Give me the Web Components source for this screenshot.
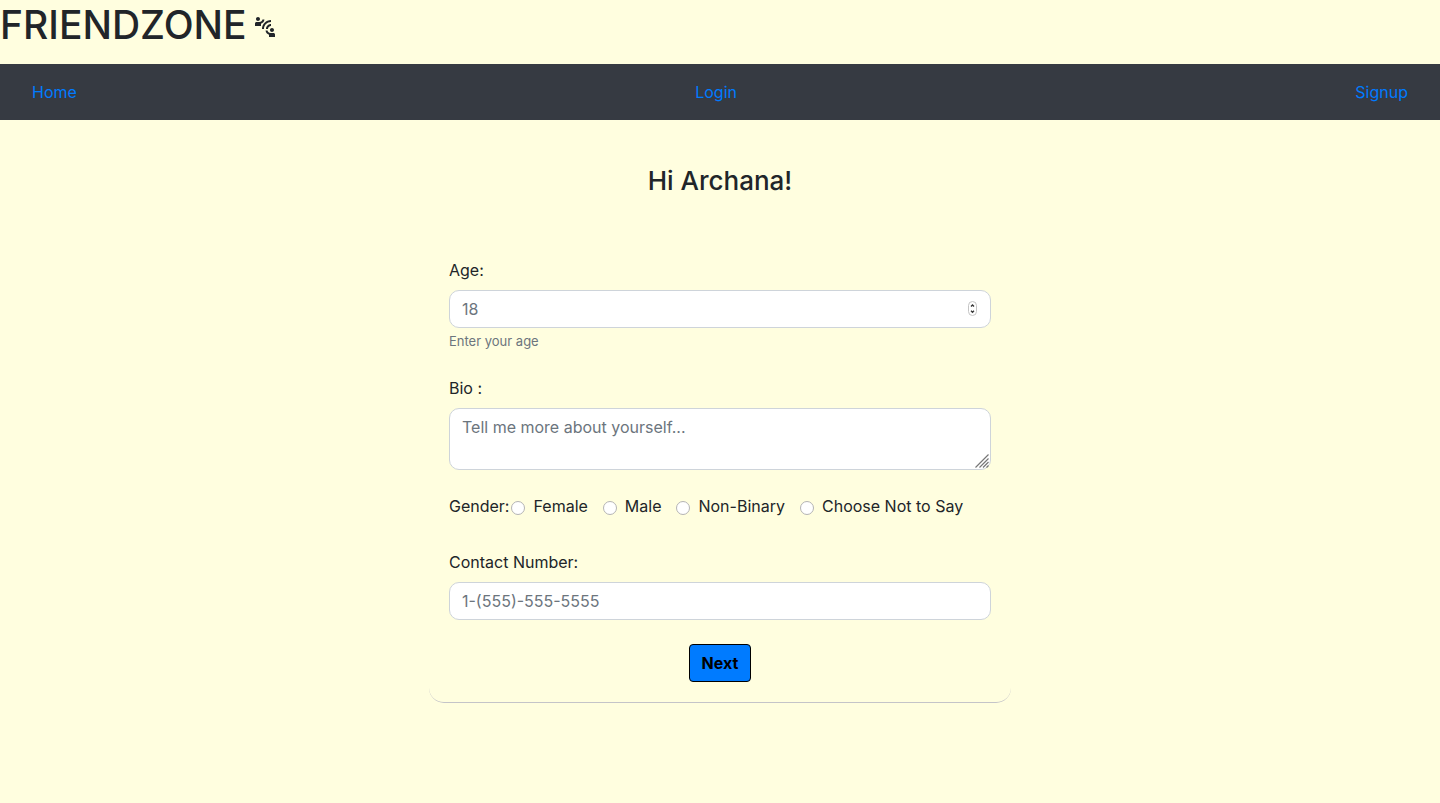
<!DOCTYPE html>
<html lang="en">
<head>
<meta charset="utf-8">
<meta name="viewport" content="width=device-width, initial-scale=1">
<title>Friendzone</title>
<style>
  body {
    margin: 0;
    background: #fffedf;
    color: #212529;
    font: 400 16px/24px Inter, "Liberation Sans", sans-serif;
  }
</style>
</head>
<body>
<fz-app></fz-app>
<script>
const define = (name, html, setup) => {
  const template = document.createElement('template');
  template.innerHTML = html;
  customElements.define(name, class extends HTMLElement {
    constructor() {
      super();
      this.attachShadow({ mode: 'open' }).append(template.content.cloneNode(true));
    }
    connectedCallback() {
      if (setup) setup(this, this.shadowRoot);
    }
  });
};

const fieldStyles = `
  :host { display: block; }
  label { display: block; margin-bottom: 8px; }
  .box { position: relative; display: flex; }
  input, textarea {
    box-sizing: border-box;
    width: 100%;
    margin: 0;
    padding: 6px 12px;
    border: 1px solid #ced4da;
    border-radius: 10px;
    background: #fff;
    color: #495057;
    font: inherit;
  }
  input { height: 38px; }
  textarea { height: 62px; resize: none; overflow: auto; }
  input::placeholder, textarea::placeholder { color: #6c757d; opacity: 1; }
  input:focus, textarea:focus { outline: 2px solid #80bdff; }
`;

define('fz-logo', `
  <style>
    :host { display: block; }
    h1 { display: flex; align-items: center; gap: 6px; margin: 0 0 14px; font-size: 39px; line-height: 50px; font-weight: 500; }
    svg { display: block; width: 24px; height: 24px; margin-top: 4px; fill: currentColor; }
  </style>
  <h1><slot></slot>
    <svg viewBox="0 0 24 24" aria-hidden="true"><path d="M11 14H9c0-4.97 4.03-9 9-9v2c-3.87 0-7 3.13-7 7zM18 11V9c-2.76 0-5 2.24-5 5h2c0-1.66 1.34-3 3-3zM7 4c0-1.11-.89-2-2-2s-2 .89-2 2 .89 2 2 2 2-.89 2-2zM11.45 4.5h-2C9.21 5.92 7.99 7 6.5 7h-3C2.67 7 2 7.67 2 8.5V11h6V8.74c1.86-.59 3.25-2.23 3.45-4.24zM19 17c1.11 0 2-.89 2-2s-.89-2-2-2-2 .89-2 2 .89 2 2 2zM20.5 18h-3c-1.49 0-2.71-1.08-2.95-2.5h-2c.2 2.01 1.59 3.65 3.45 4.24V22h6v-2.5c0-.83-.67-1.5-1.5-1.5z"/></svg>
  </h1>`);

define('fz-nav', `
  <style>
    :host { display: block; background: #363a42; }
    nav { display: flex; justify-content: space-between; padding: 8px 16px; }
    a { padding: 8px 16px; color: #007bff; text-decoration: none; }
    a:hover { text-decoration: underline; }
  </style>
  <nav><a href="#home">Home</a><a href="#login">Login</a><a href="#signup">Signup</a></nav>`);

define('fz-card', `
  <style>
    :host {
      display: flex;
      flex-direction: column;
      gap: 24px;
      box-sizing: border-box;
      width: 100%;
      max-width: 582px;
      margin: 0 auto;
      padding: 20px;
      border-bottom: 1px solid #c4c4c8;
      border-radius: 15px;
    }
  </style>
  <slot></slot>`);

define('fz-age-field', `
  <style>
    ${fieldStyles}
    input { appearance: textfield; }
    input::-webkit-inner-spin-button { appearance: none; margin: 0; }
    .spin {
      position: absolute;
      top: 11px;
      right: 14px;
      display: flex;
      padding: 0;
      border: 0;
      background: none;
    }
    small { display: block; margin: 4px 0 2px; color: #6c757d; font-size: 13px; line-height: 18px; }
  </style>
  <label for="age">Age:</label>
  <div class="box">
    <input id="age" type="number" placeholder="18" aria-describedby="hint">
    <button class="spin" type="button" tabindex="-1" aria-label="Increase age">
      <svg width="9" height="15" viewBox="0 0 9 15" fill="none" aria-hidden="true">
        <rect x=".5" y=".5" width="8" height="14" rx="4" fill="#fff" stroke="#c4c4c4"/>
        <path d="M3 5.5 4.5 4 6 5.5M3 9.8l1.5 1.5L6 9.8" stroke="#333" stroke-width="1.3"/>
      </svg>
    </button>
  </div>
  <small id="hint">Enter your age</small>`,
  (host, root) => {
    root.querySelector('.spin').onclick = () => root.querySelector('input').stepUp();
  });

define('fz-bio-field', `
  <style>
    ${fieldStyles}
    .grip { position: absolute; right: 2px; bottom: 2px; pointer-events: none; }
  </style>
  <label for="bio">Bio :</label>
  <div class="box">
    <textarea id="bio" placeholder="Tell me more about yourself..."></textarea>
    <svg class="grip" width="14" height="14" viewBox="0 0 14 14" stroke="#777" stroke-width="1.2" aria-hidden="true">
      <path d="M.5 13.5 13.5.5M4.5 13.5l9-9M8 13.5 13.5 8M11.5 13.5l2-2"/>
    </svg>
  </div>`);

define('fz-gender-field', `
  <style>
    :host { display: block; margin-bottom: 8px; }
    .group { display: flex; flex-wrap: wrap; column-gap: 15px; }
    .first { display: flex; gap: 2px; }
    label { display: flex; align-items: center; gap: 8px; }
    input {
      appearance: none;
      box-sizing: border-box;
      width: 14px;
      height: 14px;
      margin: 4px 0 0;
      border: 1px solid #b4b4b4;
      border-radius: 50%;
      background: #fff;
    }
    input:checked { border: 4px solid #007bff; }
  </style>
  <div class="group" role="radiogroup" aria-labelledby="title">
    <div class="first"><span id="title">Gender:</span><label><input type="radio" name="gender" value="female">Female</label></div>
    <label><input type="radio" name="gender" value="male">Male</label>
    <label><input type="radio" name="gender" value="non-binary">Non-Binary</label>
    <label><input type="radio" name="gender" value="unsaid">Choose Not to Say</label>
  </div>`);

define('fz-phone-field', `
  <style>${fieldStyles}</style>
  <label for="phone">Contact Number:</label>
  <div class="box"><input id="phone" type="tel" placeholder="1-(555)-555-5555"></div>`);

define('fz-button', `
  <style>
    :host { display: block; align-self: center; }
    button {
      display: block;
      padding: 6px 12px;
      border: 1px solid #000;
      border-radius: 4px;
      background: #007bff;
      color: #000;
      font: inherit;
      font-weight: 700;
      cursor: pointer;
    }
  </style>
  <button type="button"><slot></slot></button>`);

define('fz-app', `
  <style>
    :host { display: block; }
    h2 { margin: 44px 0 40px; text-align: center; font-size: 26px; line-height: 34px; font-weight: 500; }
  </style>
  <header>
    <fz-logo>FRIENDZONE</fz-logo>
    <fz-nav></fz-nav>
  </header>
  <main>
    <h2>Hi Archana!</h2>
    <fz-card>
      <fz-age-field></fz-age-field>
      <fz-bio-field></fz-bio-field>
      <fz-gender-field></fz-gender-field>
      <fz-phone-field></fz-phone-field>
      <fz-button>Next</fz-button>
    </fz-card>
  </main>`);
</script>
</body>
</html>
